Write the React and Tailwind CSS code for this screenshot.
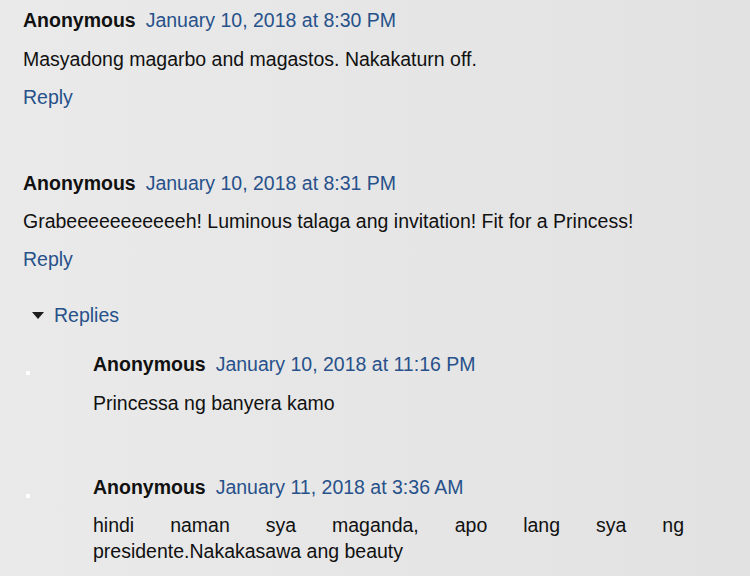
export default function App() {
  const font = { fontFamily: '"Liberation Sans", Arial, sans-serif' };
  return (
    <div
      className="w-[750px] h-[576px] overflow-hidden bg-gradient-to-r from-[#eaeaea] to-[#e2e2e2] text-[19.5px] leading-[26px] text-[#111]"
      style={font}
    >
      <div className="pl-[23px] pt-[7px]">
        {/* Comment 1 */}
        <div className="flex items-baseline">
          <span className="font-bold">Anonymous</span>
          <span className="ml-[10px] text-[#27518a]">January 10, 2018 at 8:30 PM</span>
        </div>
        <div className="mt-[13px]">Masyadong magarbo and magastos. Nakakaturn off.</div>
        <div className="mt-[12px] text-[#27518a]">Reply</div>

        {/* Comment 2 */}
        <div className="mt-[60px] flex items-baseline">
          <span className="font-bold">Anonymous</span>
          <span className="ml-[10px] text-[#27518a]">January 10, 2018 at 8:31 PM</span>
        </div>
        <div className="mt-[12px]">Grabeeeeeeeeeeeh! Luminous talaga ang invitation! Fit for a Princess!</div>
        <div className="mt-[12px] text-[#27518a]">Reply</div>

        {/* Replies toggle */}
        <div className="mt-[30px] flex items-center">
          <svg width="12" height="7" viewBox="0 0 12 7" className="ml-[9px]">
            <polygon points="0,0 12,0 6,7" fill="#1c1c1c" />
          </svg>
          <span className="ml-[10px] text-[#27518a]">Replies</span>
        </div>

        {/* Nested reply 1 */}
        <div className="mt-[23px] flex">
          <div className="w-[70px] shrink-0 relative">
            <div className="absolute left-[3px] top-[20px] w-[4px] h-[4px] bg-white/90" />
          </div>
          <div>
            <div className="flex items-baseline">
              <span className="font-bold">Anonymous</span>
              <span className="ml-[10px] text-[#27518a]">January 10, 2018 at 11:16 PM</span>
            </div>
            <div className="mt-[13px]">Princessa ng banyera kamo</div>
          </div>
        </div>

        {/* Nested reply 2 */}
        <div className="mt-[58px] flex">
          <div className="w-[70px] shrink-0 relative">
            <div className="absolute left-[3px] top-[20px] w-[4px] h-[4px] bg-white/90" />
          </div>
          <div className="w-[591px]">
            <div className="flex items-baseline">
              <span className="font-bold">Anonymous</span>
              <span className="ml-[10px] text-[#27518a]">January 11, 2018 at 3:36 AM</span>
            </div>
            <div className="mt-[12px] text-justify [text-align-last:justify]">
              hindi naman sya maganda, apo lang sya ng
            </div>
            <div>presidente.Nakakasawa ang beauty</div>
          </div>
        </div>
      </div>
    </div>
  );
}
